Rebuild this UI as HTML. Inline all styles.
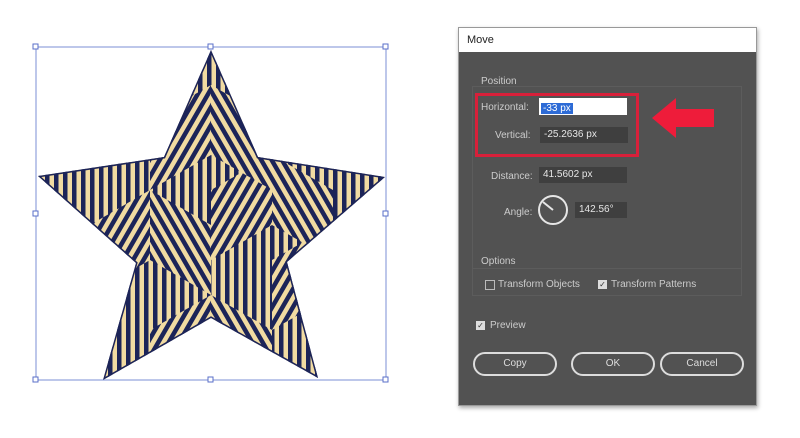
<!DOCTYPE html>
<html><head><style>
body{margin:0;width:800px;height:438px;background:#fff;position:relative;overflow:hidden;font-family:"Liberation Sans",sans-serif;}
.a{position:absolute}
.dlg{left:458px;top:27px;width:297px;height:377px;background:#525252;border:1px solid #999;box-shadow:1px 2px 4px #aaa}
.tb{left:0;top:0;width:297px;height:24px;background:#fff;color:#222;font-size:11px;line-height:24px;text-indent:8px}
.lbl{color:#ccc;font-size:10px}
.fld{background:#3f3f3f;color:#e6e6e6;font-size:10px;height:16px;line-height:16px;padding-left:4px}
.btn{border:2px solid #ddd;border-radius:13px;height:20px;line-height:20px;text-align:center;color:#ddd;font-size:10px;width:80px}
.cb{width:8px;height:8px;border:1px solid #bbb}
.cbk{width:9px;height:9px;background:#ddd;color:#333;font-size:8px;line-height:9px;text-align:center}
</style></head><body>
<svg class="a" style="left:0;top:0" width="450" height="438">
<defs>
<pattern id="s1" width="9" height="9" patternUnits="userSpaceOnUse" patternTransform="rotate(30)"><rect width="9" height="9" fill="#f1dba2"/><rect width="4.5" height="9" fill="#1c2458"/></pattern>
<pattern id="s2" width="9" height="9" patternUnits="userSpaceOnUse" patternTransform="rotate(-30)"><rect width="9" height="9" fill="#f1dba2"/><rect width="4.5" height="9" fill="#1c2458"/></pattern>
<pattern id="s3" width="9" height="9" patternUnits="userSpaceOnUse"><rect width="9" height="9" fill="#f1dba2"/><rect width="4.5" height="9" fill="#1c2458"/></pattern>
<clipPath id="st"><polygon points="211,50 258,157 385,177 287,262 318,378 211,318 103,380 136,263 38,176 164,157"/></clipPath>
</defs>
<g clip-path="url(#st)">
<rect x="0" y="0" width="450" height="438" fill="url(#s3)"/>
<g fill="url(#s1)">
<polygon points="150,120 211,85 211,155 150,190"/><polygon points="211,190 272,155 272,225 211,260"/><polygon points="90,225 150,190 150,260 90,295"/><polygon points="272,260 333,225 333,295 272,330"/><polygon points="150,330 211,295 211,365 150,400"/>
</g>
<g fill="url(#s2)">
<polygon points="211,85 272,120 272,190 211,155"/><polygon points="150,190 211,225 211,295 150,260"/><polygon points="272,155 333,190 333,260 272,225"/><polygon points="211,295 272,330 272,400 211,365"/><polygon points="30,190 90,225 90,295 30,260"/>
</g>
<polygon points="211,50 258,157 385,177 287,262 318,378 211,318 103,380 136,263 38,176 164,157" fill="none" stroke="#1c2458" stroke-width="3"/>
</g>
<rect x="36" y="47" width="350" height="333" fill="none" stroke="#7b8fd6" stroke-width="1"/>
<g fill="#fff" stroke="#5a6fc8">
<rect x="33" y="44" width="5" height="5"/><rect x="208" y="44" width="5" height="5"/><rect x="383" y="44" width="5" height="5"/>
<rect x="33" y="211" width="5" height="5"/><rect x="383" y="211" width="5" height="5"/>
<rect x="33" y="377" width="5" height="5"/><rect x="208" y="377" width="5" height="5"/><rect x="383" y="377" width="5" height="5"/>
</g>
</svg>
<div class="a dlg">
<div class="a tb">Move</div>
<div class="a" style="left:13px;top:58px;width:268px;height:208px;border:1px solid #5c5c5c"></div>
<div class="a lbl" style="left:22px;top:48px">Position</div>
<div class="a" style="left:16px;top:65px;width:158px;height:58px;border:3px solid #d8203a"></div>
<div class="a lbl" style="left:22px;top:74px">Horizontal:</div>
<div class="a" style="left:80px;top:70px;width:88px;height:17px;background:#fff"><span style="background:#2d6bd6;color:#fff;font-size:10px;padding:0 2px;line-height:17px;margin-left:2px">-33 px</span></div>
<div class="a lbl" style="left:36px;top:102px">Vertical:</div>
<div class="a fld" style="left:81px;top:99px;width:84px">-25.2636 px</div>
<svg class="a" style="left:193px;top:70px" width="64" height="40"><polygon points="0,20 24,0 24,11 62,11 62,29 24,29 24,40" fill="#ee1c3a"/></svg>
<div class="a lbl" style="left:32px;top:143px">Distance:</div>
<div class="a fld" style="left:80px;top:139px;width:84px">41.5602 px</div>
<div class="a lbl" style="left:45px;top:179px">Angle:</div>
<svg class="a" style="left:78px;top:166px" width="32" height="32"><circle cx="16" cy="16" r="14" fill="none" stroke="#e6e6e6" stroke-width="2"/><line x1="16" y1="16" x2="6" y2="8" stroke="#e6e6e6" stroke-width="2"/></svg>
<div class="a fld" style="left:116px;top:174px;width:48px">142.56°</div>
<div class="a" style="left:14px;top:240px;width:268px;height:1px;background:#5c5c5c"></div>
<div class="a lbl" style="left:22px;top:228px">Options</div>
<div class="a cb" style="left:26px;top:252px"></div>
<div class="a lbl" style="left:39px;top:251px">Transform Objects</div>
<div class="a cbk" style="left:139px;top:252px">✓</div>
<div class="a lbl" style="left:152px;top:251px">Transform Patterns</div>
<div class="a cbk" style="left:17px;top:293px">✓</div>
<div class="a lbl" style="left:31px;top:292px">Preview</div>
<div class="a btn" style="left:14px;top:324px">Copy</div>
<div class="a btn" style="left:112px;top:324px">OK</div>
<div class="a btn" style="left:201px;top:324px">Cancel</div>
</div>
</body></html>
